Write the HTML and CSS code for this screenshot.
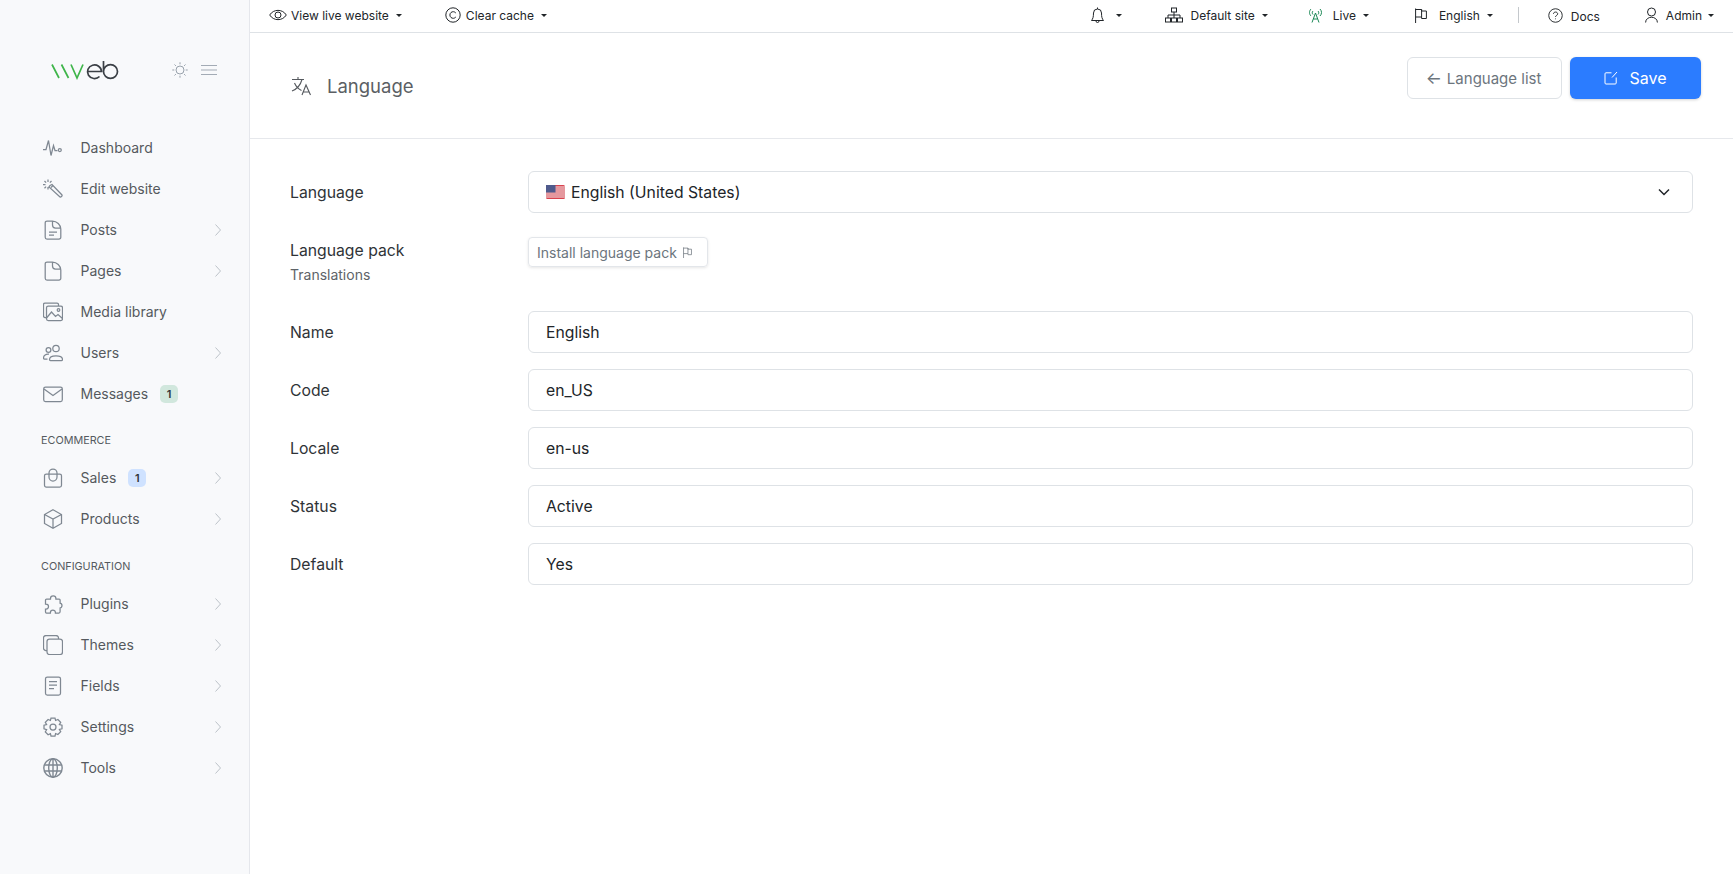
FILE: index.html
```html
<!DOCTYPE html>
<html lang="en">
<head>
<meta charset="utf-8">
<title>Language</title>
<link rel="stylesheet" href="styles.css">
</head>
<body>
<svg class="defs" aria-hidden="true"><defs>
<symbol id="chev" viewBox="0 0 6 12"><path d="M.5.5 5.500 6 .5 11.500"/></symbol>
<symbol id="flag" viewBox="0 0 12 15"><path d="M.6 15V.5M.6 1.500h6v1.500h4.800v7.500H6.600V9H.6M6.600 1.500V9"/></symbol>
</defs></svg>
<div class="app">
<aside class="sidebar">
  <div class="brand">
    <svg class="logo" width="68" height="20" viewBox="0 0 68 20"><path class="g" d="M1 4.500l7 13.500M10.500 4.500l7 13.500M20 4.500 26 18l6-13.500"/><path class="d" d="M36.500 11.500h14a7 6.800 0 1 0-2 5M52.500 1v10.500a7 6.800 0 1 0 7-6.800 7 6.800 0 0 0-7 6.800"/></svg>
    <svg class="sun" viewBox="0 0 16 16"><circle cx="8" cy="8" r="4"/><path d="M8 .3v2M8 13.700v2M.3 8h2M13.700 8h2M2.500 2.500l1.400 1.400M12.100 12.100l1.400 1.400M2.500 13.500l1.400-1.400M12.100 3.900l1.400-1.400"/></svg>
    <svg class="burger" viewBox="0 0 16 10"><path d="M0 .5h16M0 5h16M0 9.500h16"/></svg>
  </div>
  <nav class="nav">
    <a class="item"><svg class="ico" viewBox="0 0 20 20"><path d="M0 11.500h3l2.500-9 2.500 15 2.500-10 1.500 5h2.500"/><circle cx="16.800" cy="12" r="1.500"/></svg><span>Dashboard</span></a>
    <a class="item"><svg class="ico" viewBox="0 0 20 20"><path d="M7 6.500l2-1 10 10.500c.5.8-1.200 2.500-2 2L6 8zM8 8.500l2-2M5 .5V3M5 8v2.500M0 5.500h2.500M1.500 2l1.600 1.600M1.500 9.200l1.600-1.600M8.500 2 6.900 3.600"/></svg><span>Edit website</span></a>
    <a class="item"><svg class="ico" viewBox="0 0 20 20"><path d="M9.500 1H4a1.800 1.800 0 0 0-1.800 1.800v14.400A1.800 1.800 0 0 0 4 19h12a1.800 1.800 0 0 0 1.800-1.800V9c0-4-4-8-8.300-8zM9.500 1v4a3 3 0 0 0 3 3h5M6 12h8M6 15h5"/></svg><span>Posts</span><svg class="chev"><use href="#chev"/></svg></a>
    <a class="item"><svg class="ico" viewBox="0 0 20 20"><path d="M9.500 1H4a1.800 1.800 0 0 0-1.800 1.800v14.400A1.800 1.800 0 0 0 4 19h12a1.800 1.800 0 0 0 1.800-1.800V9c0-4-4-8-8.300-8zM9.500 1v4a3 3 0 0 0 3 3h5"/></svg><span>Pages</span><svg class="chev"><use href="#chev"/></svg></a>
    <a class="item"><svg class="ico" viewBox="0 0 20 20"><path d="M3 15.500H2a1.500 1.500 0 0 1-1.500-1.500V2.500A1.500 1.500 0 0 1 2 1h12a1.500 1.500 0 0 1 1.500 1.500V4"/><rect x="3.500" y="4" width="16" height="14.500" rx="1.800"/><circle cx="15.500" cy="8" r="1.300"/><path d="M3.500 16l5-6 4 4.500 2.500-2 4.500 4"/></svg><span>Media library</span></a>
    <a class="item"><svg class="ico" viewBox="0 0 20 20"><circle cx="13" cy="5.500" r="3.200"/><circle cx="5.500" cy="7" r="2.400"/><path d="M6.500 16.500c0-5 13-5 13 0 0 .6-.4 1-1 1H7.500c-.6 0-1-.4-1-1zM4.500 16H1.500c-.6 0-1-.4-1-1 0-2.600 2.500-4.200 5.500-3.800"/></svg><span>Users</span><svg class="chev"><use href="#chev"/></svg></a>
    <a class="item"><svg class="ico" viewBox="0 0 20 20"><rect x="0.700" y="3" width="18.600" height="14.500" rx="1.800"/><path d="M1 5l9 6.500L19 5"/></svg><span>Messages</span><b class="badge green">1</b></a>
    <div class="section">ECOMMERCE</div>
    <a class="item"><svg class="ico" viewBox="0 0 20 20"><rect x="1.500" y="6" width="17" height="13" rx="1.800"/><path d="M6 6.500V5a4 4 0 0 1 8 0v1.500M6 6.500v2.500a4 4 0 0 0 8 0V6.500"/></svg><span>Sales</span><b class="badge blue">1</b><svg class="chev"><use href="#chev"/></svg></a>
    <a class="item"><svg class="ico" viewBox="0 0 20 20"><path d="M10 .8l8.500 4.700v9L10 19.200l-8.500-4.700v-9zM1.500 5.500 10 10l8.500-4.500M10 10v9"/></svg><span>Products</span><svg class="chev"><use href="#chev"/></svg></a>
    <div class="section second">CONFIGURATION</div>
    <a class="item"><svg class="ico" viewBox="0 0 20 20"><path d="M7.500 4.500a2.700 2.700 0 1 1 5.400 0V5h3.200c.7 0 1 .4 1 1v3h-.6a2.500 2.500 0 0 1 0 5h.6v3.500c0 .9-.5 1.500-1.200 1.500h-3.500v-.5a2.500 2.500 0 0 0-5 0v.5H3.500c-.7 0-1-.4-1-1v-3H3a2.500 2.500 0 0 0 0-5h-.5V6c0-.6.500-1 1.100-1h3.900z"/></svg><span>Plugins</span><svg class="chev"><use href="#chev"/></svg></a>
    <a class="item"><svg class="ico" viewBox="0 0 20 20"><path d="M4 15.500H3a2.500 2.500 0 0 1-2.500-2.500V3A2.500 2.500 0 0 1 3 .5h10A2.500 2.500 0 0 1 15.500 3v1"/><rect x="4" y="4" width="15.500" height="15.500" rx="2.500"/></svg><span>Themes</span><svg class="chev"><use href="#chev"/></svg></a>
    <a class="item"><svg class="ico" viewBox="0 0 20 20"><rect x="2.500" y="1" width="15" height="18" rx="1.800"/><path d="M6 5.500h8M6 9h8M6 12.500h5"/></svg><span>Fields</span><svg class="chev"><use href="#chev"/></svg></a>
    <a class="item"><svg class="ico" viewBox="0 0 20 20"><path d="M8 1h4l.6 2.500 2.300-1 2.800 2.800-1.300 2.200 2.600.7v3.600l-2.600.7 1.300 2.200-2.800 2.800-2.300-1L12 19H8l-.6-2.300-2.300 1-2.800-2.800 1.300-2.200L1 11.800V8.200l2.600-.7-1.300-2.200 2.800-2.800 2.300 1z"/><circle cx="10" cy="10" r="3"/></svg><span>Settings</span><svg class="chev"><use href="#chev"/></svg></a>
    <a class="item"><svg class="ico thick" viewBox="0 0 20 20"><circle cx="10" cy="10" r="9.200"/><ellipse cx="10" cy="10" rx="4.300" ry="9.200"/><path d="M10 .8v18.400M1.300 7h17.400M1.300 13h17.400"/></svg><span>Tools</span><svg class="chev"><use href="#chev"/></svg></a>
  </nav>
</aside>
<main class="main">
  <header class="topbar">
    <a class="tb w-view"><svg class="tbi i-eye" viewBox="0 0 18 14"><path d="M.7 7C4.500.8 13.500.8 17.300 7 13.500 13.200 4.500 13.200.7 7z"/><circle cx="9" cy="7" r="3"/></svg>View live website<i class="caret"></i></a>
    <a class="tb w-clear"><svg class="tbi i-clear" viewBox="0 0 16 16"><circle cx="8" cy="8" r="7.200"/><path d="M10.800 6a3.300 3.300 0 1 0 0 4"/></svg>Clear cache<i class="caret"></i></a>
    <span class="spacer"></span>
    <a class="tb w-bell"><svg class="tbi i-bell" viewBox="0 0 13 17"><path d="M6.500 2a4 4 0 0 0-4 4c0 4-.6 5.800-2 7.500h12c-1.400-1.700-2-3.500-2-7.500a4 4 0 0 0-4-4zM6.500.5V2M5 14a1.500 1.500 0 0 0 3 0"/></svg><i class="caret"></i></a>
    <a class="tb w-site"><svg class="tbi i-site" viewBox="0 0 18 16"><rect x="6.500" y="1" width="5" height="4"/><rect x=".5" y="11" width="5" height="4"/><rect x="6.500" y="11" width="5" height="4"/><rect x="12.500" y="11" width="5" height="4"/><path d="M9 5v6M3 11V8h12v3"/></svg>Default site<i class="caret"></i></a>
    <a class="tb w-live"><svg class="tbi i-live" viewBox="0 0 15 16"><path d="M7.500 6 4 15.500M7.500 6 11 15.500M5.500 12h4M3 2c-2 2-2 5 0 7M12 2c2 2 2 5 0 7M5 4c-1 1-1 2.500 0 3.500M10 4c1 1 1 2.500 0 3.500"/></svg>Live<i class="caret"></i></a>
    <a class="tb w-lang"><svg class="tbi i-flag"><use href="#flag"/></svg>English<i class="caret"></i></a>
    <span class="vline"></span>
    <a class="tb w-docs"><svg class="tbi i-docs" viewBox="0 0 16 16"><circle cx="8" cy="8" r="7.200"/><path d="M5.800 6.200C6 3.600 10.300 3.800 10.300 6.200c0 1.800-2.300 1.700-2.300 3.300M8 11.200v.8"/></svg><span class="docs">Docs</span></a>
    <a class="tb w-user"><svg class="tbi i-user" viewBox="0 0 13 16"><circle cx="6.500" cy="5" r="4"/><path d="M.6 15.500c0-7 11.800-7 11.800 0"/></svg>Admin<i class="caret"></i></a>
  </header>
  <section class="head">
    <div class="title"><svg class="tr" viewBox="0 0 21 20"><path d="M1 3.500h12M7 1v2.500M11 3.500C9.500 9 6 13 1 15M3.500 7c1.500 3.500 4 6 7 7.500M11 19l4-10 4.500 10M12.500 16h5.500"/></svg><h1>Language</h1></div>
    <div class="actions">
      <a class="btn light"><span class="arrow">←</span> Language list</a>
      <a class="btn primary"><svg class="edit" viewBox="0 0 14 14"><path d="M7.500 1.800H2a1 1 0 0 0-1 1V12a1 1 0 0 0 1 1h9.200a1 1 0 0 0 1-1V6.500M8 6.500 13 1"/></svg>Save</a>
    </div>
  </section>
  <form class="form">
    <div class="row"><label class="lbl">Language</label>
      <div class="field select"><svg class="usa" viewBox="0 0 19 14"><rect width="19" height="14" rx="1.500" fill="#d8434e"/><path d="M0 2h19M0 4h19M0 6h19M0 8h19M0 10h19M0 12h19" stroke="#f2eeee"/><rect width="9.500" height="7.500" fill="#4f5a8c"/></svg>English (United States)<svg class="down" viewBox="0 0 12 8"><path d="M1 1.500 6 6.500l5-5"/></svg></div></div>
    <div class="row pack"><div class="lbl">Language pack<small>Translations</small></div>
      <div><a class="install">Install language pack<svg class="mini"><use href="#flag"/></svg></a></div></div>
    <div class="row"><label class="lbl">Name</label><div class="field">English</div></div>
    <div class="row"><label class="lbl">Code</label><div class="field">en_US</div></div>
    <div class="row"><label class="lbl">Locale</label><div class="field">en-us</div></div>
    <div class="row"><label class="lbl">Status</label><div class="field">Active</div></div>
    <div class="row"><label class="lbl">Default</label><div class="field">Yes</div></div>
  </form>
</main>
</div>
</body>
</html>
```
FILE: styles.css
```css
* { box-sizing: border-box; }
html, body { margin: 0; height: 100%; }
body { font-family: Inter, "Liberation Sans", sans-serif; color: #212529; background: #fff; overflow: hidden; }
.defs { width: 0; height: 0; position: absolute; }
.app { display: flex; height: 874px; }

.sidebar { width: 250px; flex: none; background: #f8f9fb; border-right: 1px solid #e5e7ec; padding-top: 57px; }
.brand { display: flex; align-items: center; height: 26px; padding-left: 51px; }
.logo { width: 68px; height: 20px; fill: none; }
.logo .g { stroke: #3fb54a; stroke-width: 1.7; }
.logo .d { stroke: #3a3f45; stroke-width: 1.7; }
.sun { width: 16px; height: 16px; margin-left: 53px; fill: none; stroke: #98a1ab; stroke-width: 1; }
.burger { width: 16px; height: 10px; margin-left: 13px; fill: none; stroke: #a3abb5; stroke-width: 1; }

.nav { margin-top: 44px; display: flex; flex-direction: column; }
.item { display: flex; align-items: center; height: 41px; padding: 0 28px 0 43px; font-size: 14px; color: #55595e; }
.ico { width: 20px; height: 20px; flex: none; margin-right: 17.500px; fill: none; stroke: #7f8892; stroke-width: 1.25; }
.ico.thick { stroke-width: 1.4; }
.chev { width: 6px; height: 12px; margin-left: auto; fill: none; stroke: #bcc2c9; stroke-width: 1; }
.badge { font-weight: 600; font-size: 11px; line-height: 18px; width: 18px; height: 18px; border-radius: 5px; text-align: center; margin-left: 12px; color: #2f3438; }
.badge.green { background: #d1e7dd; }
.badge.blue { background: #cfe2ff; }
.section { height: 13px; margin: 20px 0 10px 41px; font-size: 10.800px; line-height: 13px; color: #555a60; }
.section.second { margin-top: 21px; }

.main { flex: 1; min-width: 0; }
.topbar { display: flex; align-items: center; height: 33px; padding-bottom: 2px; border-bottom: 1px solid #dee2e6; font-size: 12px; color: #212529; }
.tb { display: flex; align-items: center; }
.tbi { height: 16px; fill: none; stroke: #212529; stroke-width: 1; flex: none; }
.i-eye { width: 18px; height: 14px; margin-right: 4px; }
.i-clear { width: 16px; margin-right: 5px; }
.i-bell { width: 13px; height: 17px; margin-right: 12px; }
.i-site { width: 18px; margin-right: 8px; }
.i-live { width: 15px; margin-right: 10px; stroke: #198754; }
.i-flag { width: 12px; height: 15px; margin-right: 12px; }
.i-docs { width: 15px; height: 15px; margin-right: 8px; }
.i-user { width: 13px; margin-right: 8px; }
.caret { width: 0; height: 0; margin-left: 7px; border-top: 3.500px solid #212529; border-left: 3px solid transparent; border-right: 3px solid transparent; }
.w-bell .caret { margin-left: 0; }
.w-user .caret { margin-left: 6px; }
.spacer { flex: 1; }
.w-view { margin-left: 19px; }
.w-clear { margin-left: 43px; }
.w-site { margin-left: 43px; }
.w-live { margin-left: 40px; }
.w-lang { margin-left: 46px; }
.vline { width: 1px; height: 16px; background: #c4c8cc; margin-left: 25px; }
.w-docs { margin-left: 29px; }
.docs { margin-top: 2px; }
.w-user { margin-left: 45px; margin-right: 19px; }

.head { display: flex; justify-content: space-between; height: 106px; border-bottom: 1px solid #e6e8ec; padding: 24px 32px 0 41px; }
.title { display: flex; align-items: center; height: 58px; }
.tr { width: 21px; height: 20px; fill: none; stroke: #55595e; stroke-width: 1.1; margin-right: 15px; }
h1 { margin: 0; font-size: 18.500px; font-weight: 400; color: #5b5f64; }
.actions { display: flex; gap: 8px; height: 42px; }
.btn { display: flex; align-items: center; justify-content: center; height: 42px; border-radius: 6px; font-size: 15px; }
.btn.light { width: 155px; border: 1px solid #dee2e6; color: #6c757d; }
.arrow { margin-right: 5px; margin-left: -2px; font-size: 17px; line-height: 1; }
.btn.primary { width: 131px; background: #2b7cff; color: #fff; font-size: 16px; box-shadow: 0 1px 3px rgba(0,0,0,.18); }
.edit { width: 14px; height: 14px; margin-right: 11px; fill: none; stroke: #fff; stroke-width: 1; }

.form { padding: 32px 40px 0 40px; display: flex; flex-direction: column; gap: 16px; }
.row { display: grid; grid-template-columns: 238px 1fr; align-items: center; }
.lbl { font-size: 15.750px; color: #2f3337; }
.lbl small { display: block; font-size: 14px; color: #5e6368; margin-top: 6px; }
.field { display: flex; align-items: center; height: 42px; border: 1px solid #dee2e6; border-radius: 6px; padding: 0 17px; font-size: 15.750px; color: #212529; }
.usa { width: 19px; height: 14px; margin-right: 6px; }
.down { width: 12px; height: 8px; margin-left: auto; margin-right: 5px; fill: none; stroke: #212529; stroke-width: 1.5; }
.row.pack { align-items: start; margin-top: 8px; height: 58px; }
.pack .lbl { padding-top: 4px; }
.install { display: inline-flex; align-items: center; height: 30px; padding: 0 15px 0 8px; border: 1px solid #e3e6ea; border-radius: 4px; font-size: 14px; color: #6c757d; box-shadow: 0 1px 3px rgba(0,0,0,.1); }
.mini { width: 9px; height: 11px; margin-left: 6px; fill: none; stroke: #6c757d; stroke-width: 1; }
```
